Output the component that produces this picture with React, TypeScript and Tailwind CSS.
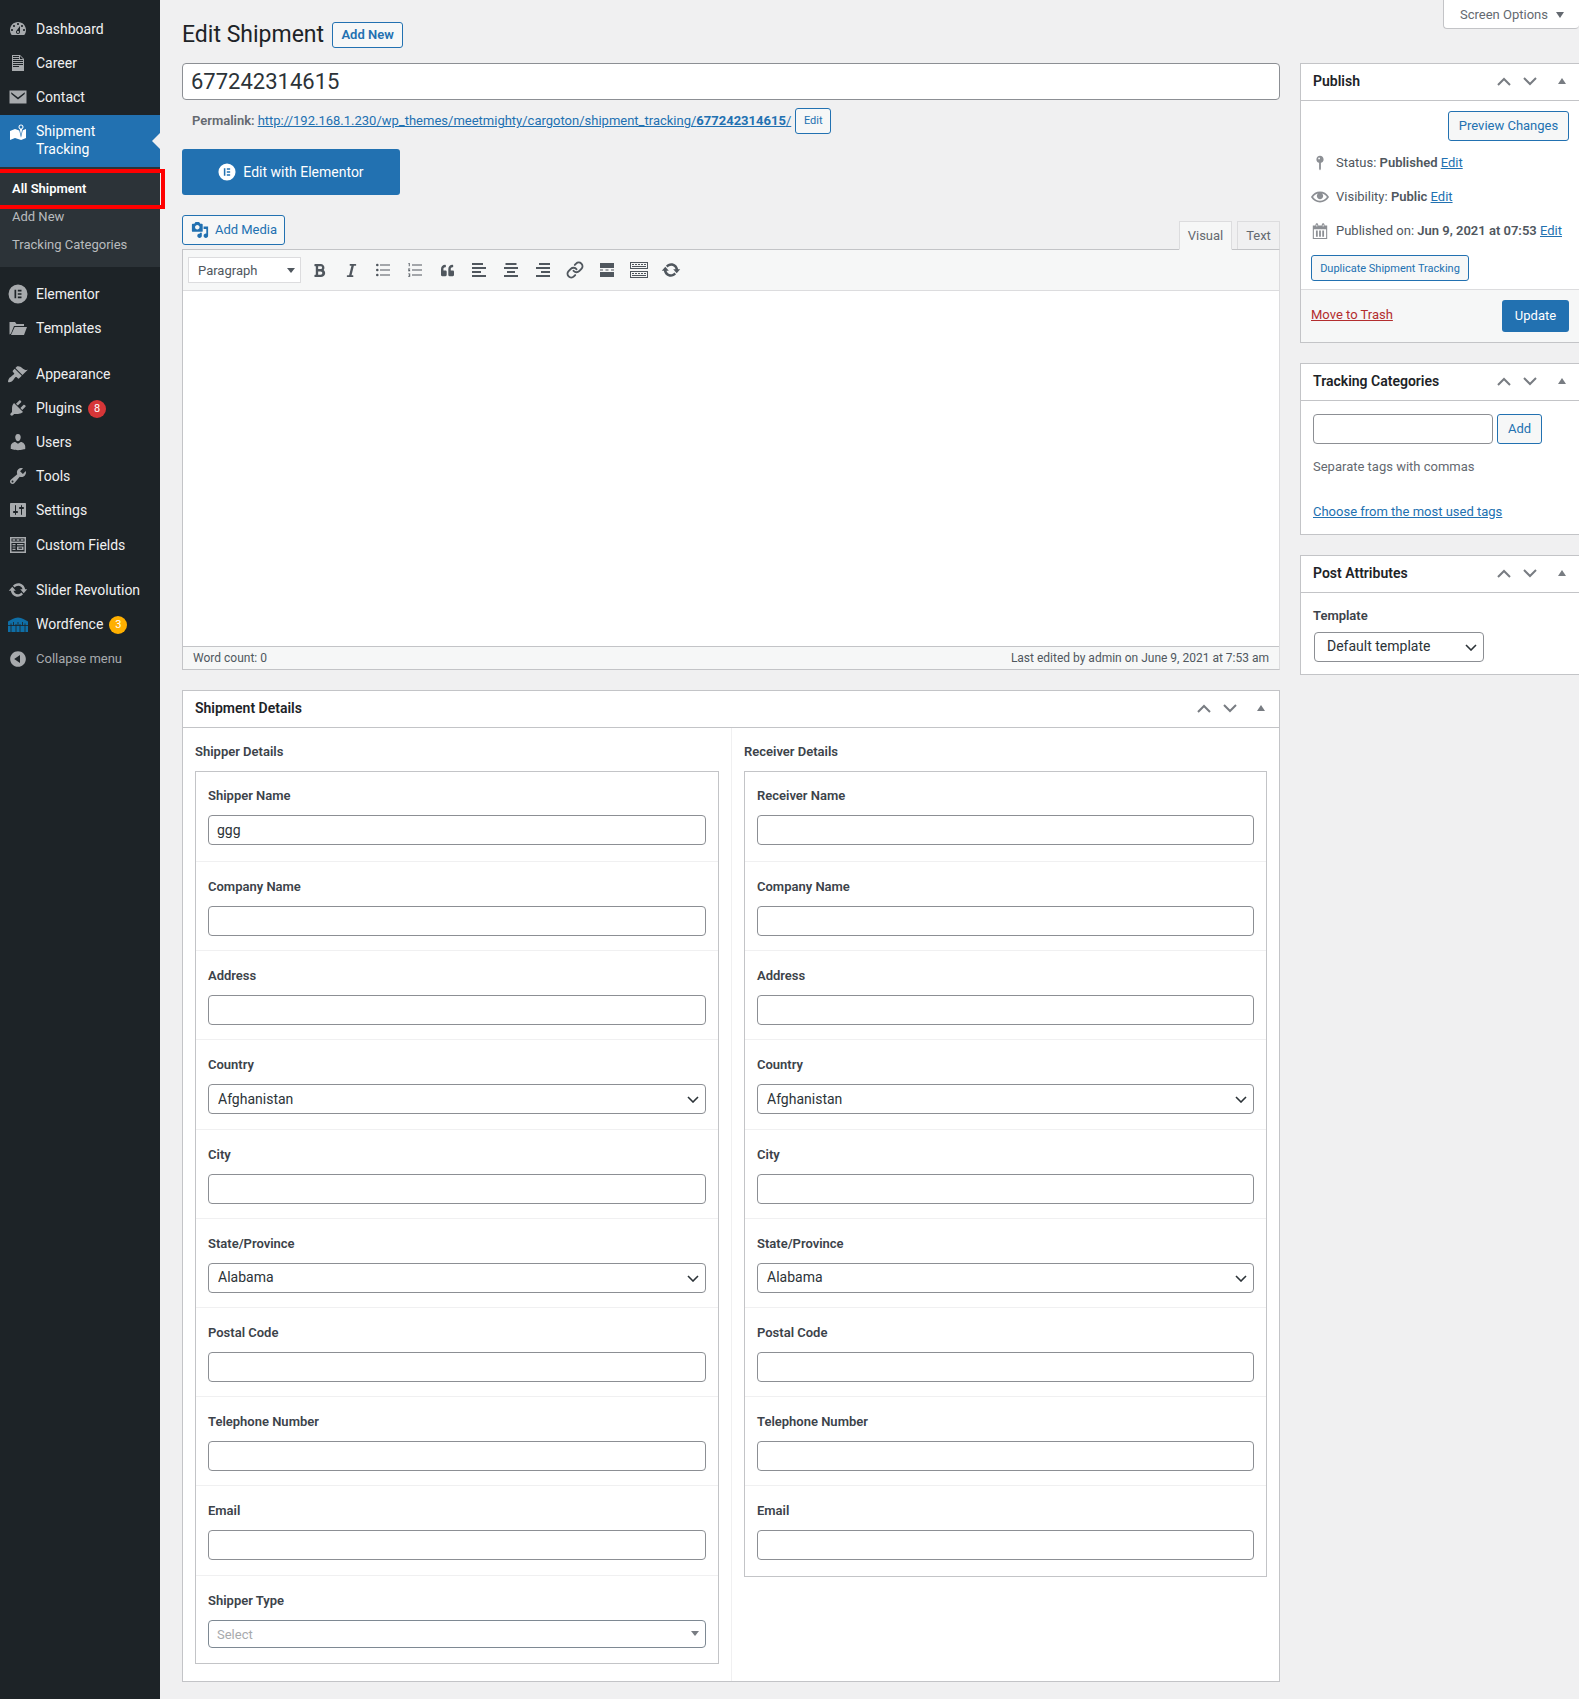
import React from "react";
import { FaBold, FaItalic, FaQuoteLeft } from "react-icons/fa";
import { Link } from "lucide-react";

const P: Record<string, string> = {
  dashboard: "M3.76 16h12.48c1.1-1.37 1.76-3.11 1.76-5 0-4.42-3.58-8-8-8s-8 3.58-8 8c0 1.89.66 3.63 1.76 5zM10 4c.55 0 1 .45 1 1s-.45 1-1 1-1-.45-1-1 .45-1 1-1zM6 6c.55 0 1 .45 1 1s-.45 1-1 1-1-.45-1-1 .45-1 1-1zm8 0c.55 0 1 .45 1 1s-.45 1-1 1-1-.45-1-1 .45-1 1-1zm-5.37 5.55L12 7v6c0 1.1-.9 2-2 2s-2-.9-2-2c0-.57.24-1.08.63-1.45zM4 10c.55 0 1 .45 1 1s-.45 1-1 1-1-.45-1-1 .45-1 1-1zm12 0c.55 0 1 .45 1 1s-.45 1-1 1-1-.45-1-1 .45-1 1-1zm-5 3c0-.55-.45-1-1-1s-1 .45-1 1 .45 1 1 1 1-.45 1-1z",
  page: "M12 2l4 4v12H4V2h8zM5 3v1h6V3H5zm7 3h3l-3-3v3zM5 5v1h6V5H5zm10 3V7H5v1h10zm0 2V9H5v1h10zm0 2v-1H5v1h10zm-4 2v-1H5v1h6z",
  email: "M1.5 3.5h17v13h-17zM3.2 5.2L10 10.6l6.8-5.4-.1 1.7L10 12.4 3.3 6.9z",
  location: "M13 13.14l1.17-5.94c.79-.43 1.33-1.25 1.33-2.2 0-1.38-1.12-2.5-2.5-2.5S10.5 3.62 10.5 5c0 .95.54 1.77 1.33 2.2zm0-9.64c.83 0 1.5.67 1.5 1.5s-.67 1.5-1.5 1.5-1.5-.67-1.5-1.5.67-1.5 1.5-1.5zm1.72 4.8L18 6.97v9L13.12 18 7 15.97l-5 2v-9l5-2 4.27 1.41 1.73 7.3z",
  elementor: "M10 .5a9.5 9.5 0 1 0 0 19 9.5 9.5 0 0 0 0-19zM6.5 5.8h1.7v8.4H6.5zM9.8 5.8h3.7v1.7H9.8zM9.8 9.15h3.7v1.7H9.8zM9.8 12.5h3.7v1.7H9.8z",
  folder: "M1.5 16.5V4h5.5l1.5 2H16v2H6L3 15.5zM6.7 9H19l-3 8H3z",
  brush: "M14.48 11.06L7.41 3.99l1.5-1.5c.5-.56 2.3-.47 3.51.32 1.21.8 1.43 1.28 2.91 2.1 1.18.64 2.45 1.26 4.45.85zm-.71.71L6.7 4.7 4.93 6.47c-.39.39-.39 1.02 0 1.41l1.06 1.06c.39.39.39 1.03 0 1.42-.6.6-1.43 1.11-2.21 1.69-.35.26-.7.53-1.01.84C1.43 13.23 0 15.6 0 18c2 .5 3.5-.1 4.8-1.5.31-.31.58-.66.84-1.01.58-.78 1.09-1.61 1.69-2.21.39-.39 1.03-.39 1.42 0l1.06 1.06c.39.39 1.02.39 1.41 0z",
  plugin: "M13.11 4.36L9.87 7.6 8 5.73l3.24-3.24c.35-.34 1.05-.2 1.56.32.52.51.66 1.21.31 1.55zm-8 1.77l.91-1.12 9.01 9.01-1.19.84c-.71.71-2.63 1.16-3.82 1.16H6.14L4.9 17.26c-.59.59-1.54.59-2.12 0-.59-.58-.59-1.53 0-2.12l1.24-1.24v-3.88c0-1.13.4-3.19 1.09-3.89zm7.26 3.97l3.24-3.24c.34-.35 1.04-.21 1.55.31.52.51.66 1.21.31 1.55l-3.24 3.25z",
  users: "M10 9.25c-2.27 0-2.73-3.44-2.73-3.44C7 4.02 7.82 2 9.97 2c2.16 0 2.98 2.02 2.71 3.81 0 0-.41 3.44-2.68 3.44zm0 2.57L12.72 10c2.39 0 4.52 2.33 4.52 4.53v2.49s-3.65 1.13-7.24 1.13c-3.65 0-7.24-1.13-7.24-1.13v-2.49c0-2.25 1.94-4.48 4.47-4.48z",
  tools: "M16.68 9.77c-1.34 1.34-3.3 1.67-4.95.99l-5.41 6.52c-.99.99-2.59.99-3.58 0s-.99-2.59 0-3.57l6.52-5.42c-.68-1.65-.35-3.61.99-4.95 1.28-1.28 3.12-1.62 4.72-1.06l-2.89 2.89 2.82 2.82 2.86-2.87c.53 1.58.18 3.39-1.08 4.65zM3.81 16.21c.4.39 1.04.39 1.43 0 .4-.4.4-1.04 0-1.43-.39-.4-1.03-.4-1.43 0-.39.39-.39 1.03 0 1.43z",
  settings: "M18 16V4c0-.55-.45-1-1-1H3c-.55 0-1 .45-1 1v12c0 .55.45 1 1 1h14c.55 0 1-.45 1-1zM8 11h1c.55 0 1 .45 1 1s-.45 1-1 1H8v1.5c0 .28-.22.5-.5.5s-.5-.22-.5-.5V13H6c-.55 0-1-.45-1-1s.45-1 1-1h1V5.5c0-.28.22-.5.5-.5s.5.22.5.5V11zm5-2h-1c-.55 0-1-.45-1-1s.45-1 1-1h1V5.5c0-.28.22-.5.5-.5s.5.22.5.5V7h1c.55 0 1 .45 1 1s-.45 1-1 1h-1v5.5c0 .28-.22.5-.5.5s-.5-.22-.5-.5V9z",
  fields: "M2 2h16v16H2zM3.5 3.5v3h13v-3zM4.5 4.3h2.8v1.4H4.5zM8.6 4.3h2.8v1.4H8.6zM12.7 4.3h2.8v1.4h-2.8zM3.5 8v8.5h13V8zM4.5 9h3v1.2h-3zM9 9h6.5v1.2H9zM4.5 11.4h3v1.2h-3zM9 11.4h6.5v3.6H9zM10.5 12.6h3.5v1.2h-3.5zM4.5 13.8h3V15h-3z",
  update: "M10.2 3.28c3.53 0 6.43 2.61 6.92 6h2.08l-3.5 4-3.5-4h2.32c-.45-1.97-2.21-3.45-4.32-3.45-1.45 0-2.73.71-3.54 1.78L4.95 5.66C6.23 4.2 8.11 3.28 10.2 3.28zm-.4 13.44c-3.52 0-6.43-2.61-6.92-6H.8l3.5-4c1.17 1.33 2.33 2.67 3.5 4H5.48c.45 1.97 2.21 3.45 4.32 3.45 1.45 0 2.73-.71 3.54-1.78l1.71 1.95c-1.28 1.46-3.15 2.38-5.25 2.38z",
  collapse: "M10 2.16c4.33 0 7.84 3.51 7.84 7.84s-3.51 7.84-7.84 7.84S2.16 14.33 2.16 10 5.71 2.16 10 2.16zm2 11.72V6.12L6.18 9.97z",
  pin: "M14 6c0 1.86-1.28 3.41-3 3.86V16c0 1-1 2-1 2s-1-1-1-2V9.86c-1.72-.45-3-2-3-3.86 0-2.21 1.79-4 4-4s4 1.79 4 4zM8 5c0 .55.45 1 1 1s1-.45 1-1-.45-1-1-1-1 .45-1 1z",
  eye: "M19.7 9.4C17.7 6 14 3.9 10 3.9S2.3 6 .3 9.4L0 10l.3.6c2 3.4 5.7 5.5 9.7 5.5s7.7-2.1 9.7-5.5l.3-.6-.3-.6zM10 14.1c-3.1 0-6-1.6-7.7-4.1C3.6 8 5.7 6.6 8 6.1c-.9.6-1.5 1.7-1.5 2.9 0 1.9 1.6 3.5 3.5 3.5s3.5-1.6 3.5-3.5c0-1.2-.6-2.3-1.5-2.9 2.3.5 4.4 1.9 5.7 3.9-1.7 2.5-4.6 4.1-7.7 4.1z",
  calendar: "M15 4h3v15H2V4h3V3c0-.41.15-.76.44-1.06.29-.29.65-.44 1.06-.44s.77.15 1.06.44c.29.3.44.65.44 1.06v1h4V3c0-.41.15-.76.44-1.06.29-.29.65-.44 1.06-.44s.77.15 1.06.44c.29.3.44.65.44 1.06v1zM6 5h1V3H6zm7 0h1V3h-1zM3.2 17.8h13.6V8H3.2zM5.5 9.5h2v7h-2zM9 9.5h2v7H9zM12.5 9.5h2v7h-2z",
  media: "M13 11V4c0-.55-.45-1-1-1h-1.67L9 1H5L3.67 3H2c-.55 0-1 .45-1 1v7c0 .55.45 1 1 1h10c.55 0 1-.45 1-1zM7 4.5c1.38 0 2.5 1.12 2.5 2.5S8.38 9.5 7 9.5 4.5 8.38 4.5 7 5.62 4.5 7 4.5zM14 6h5v10.5c0 1.38-1.12 2.5-2.5 2.5S14 17.88 14 16.5s1.12-2.5 2.5-2.5c.17 0 .34.02.5.05V9h-3V6zm-4 8.05V13h2v3.5c0 1.38-1.12 2.5-2.5 2.5S7 17.88 7 16.5 8.12 14 9.5 14c.17 0 .34.02.5.05z",
};

function Dash({ name, className }: { name: string; className: string }) {
  return (
    <svg viewBox="0 0 20 20" className={className} fill="currentColor">
      <path fillRule="evenodd" d={P[name]} />
    </svg>
  );
}

function Wordfence() {
  return (
    <svg viewBox="0 0 20 15" className="w-[20px] h-[15px]">
      <path d="M0 4.5C3 3 6 .5 10 .5s7 2.5 10 4V15H0z" fill="#0f6ea6" />
      <g stroke="#1d2327" strokeWidth="0.8">
        <path d="M0 8.5h20M3 6.5V15M5.5 5v3.5M8 7v8M10 5v3.5M12 7v8M14.5 5v3.5M17 6.5V15" />
      </g>
    </svg>
  );
}

type Item = { icon: string; label: string; badge?: { n: string; c: string } };

function MenuItem({ icon, label, badge }: Item) {
  return (
    <div className="flex items-center h-[34px] text-[14px] leading-[18px] text-[#f0f0f1]">
      <div className="w-[36px] flex justify-center text-[#a7aaad]">
        {icon === "wordfence" ? <Wordfence /> : <Dash name={icon} className="w-[20px] h-[20px]" />}
      </div>
      <span>{label}</span>
      {badge && (
        <span className={`ml-[6px] w-[18px] h-[18px] translate-y-[1px] rounded-full text-white text-[11px] flex items-center justify-center ${badge.c}`}>
          {badge.n}
        </span>
      )}
    </div>
  );
}

function Sidebar() {
  return (
    <aside className="w-[160px] shrink-0 bg-[#1d2327] relative">
      <div className="pt-[12px]">
        <MenuItem icon="dashboard" label="Dashboard" />
        <MenuItem icon="page" label="Career" />
        <MenuItem icon="email" label="Contact" />
        <div className="mt-[1px] bg-[#2271b1] h-[52px] flex items-start relative text-white text-[14px] leading-[18px]">
          <div className="w-[36px] flex justify-center pt-[7px] text-white">
            <Dash name="location" className="w-[20px] h-[20px]" />
          </div>
          <span className="pt-[7px]">
            Shipment
            <br />
            Tracking
          </span>
          <span className="absolute right-0 top-[18px] border-y-[8px] border-y-transparent border-r-[8px] border-r-[#f0f0f1]" />
        </div>
        <div className="bg-[#2c3338] h-[100px] pt-[8px] text-[13px] leading-[28px] text-[#b8bbbe] pl-[12px]">
          <div className="h-[28px] font-semibold text-white">All Shipment</div>
          <div className="h-[28px]">Add New</div>
          <div className="h-[28px]">Tracking Categories</div>
        </div>
        <div className="mt-[10px]">
          <MenuItem icon="elementor" label="Elementor" />
          <MenuItem icon="folder" label="Templates" />
        </div>
        <div className="mt-[12px]">
          <MenuItem icon="brush" label="Appearance" />
          <MenuItem icon="plugin" label="Plugins" badge={{ n: "8", c: "bg-[#d63638]" }} />
          <MenuItem icon="users" label="Users" />
          <MenuItem icon="tools" label="Tools" />
          <MenuItem icon="settings" label="Settings" />
          <div className="mt-[1px]">
            <MenuItem icon="fields" label="Custom Fields" />
          </div>
        </div>
        <div className="mt-[11px]">
          <MenuItem icon="update" label="Slider Revolution" />
          <MenuItem icon="wordfence" label="Wordfence" badge={{ n: "3", c: "bg-[#ffb000]" }} />
          <div className="mt-[1px] flex items-center h-[34px] text-[13px] text-[#a7aaad]">
            <div className="w-[36px] flex justify-center">
              <Dash name="collapse" className="w-[20px] h-[20px]" />
            </div>
            <span>Collapse menu</span>
          </div>
        </div>
      </div>
      <div className="absolute left-[-4px] top-[169px] w-[169px] h-[40px] border-[4px] border-[#ff0000]" />
    </aside>
  );
}

function Handles({ gap }: { gap: string }) {
  return (
    <div className="flex items-center text-[#787c82]">
      <svg viewBox="0 0 14 9" className="w-[14px] h-[9px]" fill="none" stroke="currentColor" strokeWidth="2">
        <path d="M1 8l6-6 6 6" />
      </svg>
      <svg viewBox="0 0 14 9" className="w-[14px] h-[9px] ml-[12px]" fill="none" stroke="currentColor" strokeWidth="2">
        <path d="M1 1l6 6 6-6" />
      </svg>
      <svg viewBox="0 0 8 6" className={`w-[8px] h-[6px] ${gap}`} fill="currentColor">
        <path d="M4 0l4 6H0z" />
      </svg>
    </div>
  );
}

function PanelHeader({ title, className, gap }: { title: string; className: string; gap: string }) {
  return (
    <div className={`flex items-center justify-between border-b border-[#c3c4c7] pb-[2px] ${className}`}>
      <span className="text-[14px] font-semibold text-[#1d2327]">{title}</span>
      <Handles gap={gap} />
    </div>
  );
}

const inputCls = "block w-full border border-[#8c8f94] rounded-[4px] bg-white";

function Chevron() {
  return (
    <svg viewBox="0 0 12 7" className="w-[12px] h-[7px] absolute right-[7px] top-[12px] pointer-events-none" fill="none" stroke="#2c3338" strokeWidth="1.6">
      <path d="M1 1l5 5 5-5" />
    </svg>
  );
}

function Field({ label, value, select, first }: { label: string; value?: string; select?: boolean; first?: boolean }) {
  return (
    <div className={`${first ? "h-[90px] pt-[14px]" : "h-[89.2px] pt-[15px]"} px-[12px] border-b border-[#f0f0f1] last:border-b-0`}>
      <div className="text-[13px] leading-[20px] font-semibold text-[#3c434a] mb-[9px]">{label}</div>
      {select ? (
        <div className="relative">
          <select className={`${inputCls} h-[30px] pl-[9px] text-[14px] text-[#2c3338] appearance-none`} defaultValue={value}>
            <option>{value}</option>
          </select>
          <Chevron />
        </div>
      ) : (
        <input readOnly value={value || ""} className={`${inputCls} h-[30px] px-[8px] text-[14px] text-[#2c3338]`} />
      )}
    </div>
  );
}

function Column({ type, title, wrap }: { type: "Shipper" | "Receiver"; title: string; wrap: string }) {
  return (
    <div className={wrap}>
      <div className="h-[43px] pt-[14px] text-[13px] leading-[20px] font-semibold text-[#3c434a]">{title}</div>
      <div className="border border-[#c3c4c7]">
        <Field first label={`${type} Name`} value={type === "Shipper" ? "ggg" : ""} />
        <Field label="Company Name" />
        <Field label="Address" />
        <Field label="Country" value="Afghanistan" select />
        <Field label="City" />
        <Field label="State/Province" value="Alabama" select />
        <Field label="Postal Code" />
        <Field label="Telephone Number" />
        <Field label="Email" />
        {type === "Shipper" && (
          <div className="h-[88px] pt-[15px] px-[12px] border-t border-[#f0f0f1] mt-[-1px]">
            <div className="text-[13px] leading-[20px] font-semibold text-[#3c434a] mb-[9px]">Shipper Type</div>
            <div className="flex items-center justify-between h-[28px] border border-[#7e8993] rounded-[4px] pl-[8px] pr-[6px] text-[13px] text-[#a7aaad]">
              <span className="pt-[2px]">Select</span>
              <span className="border-x-[4px] border-x-transparent border-t-[5px] border-t-[#787c82]" />
            </div>
          </div>
        )}
      </div>
    </div>
  );
}

function Toolbar() {
  const Btn = ({ children }: { children: React.ReactNode }) => (
    <div className="w-[32px] h-[26px] flex items-center justify-center text-[#50575e]">{children}</div>
  );
  const Lines = ({ kind }: { kind: "l" | "c" | "r" }) => (
    <svg viewBox="0 0 14 14" className="w-[14px] h-[14px]" fill="#50575e">
      {kind === "l" && <path d="M0 0h11v2H0zM0 4h14v2H0zM0 8h9v2H0zM0 12h14v2H0z" />}
      {kind === "c" && <path d="M1.5 0h11v2h-11zM0 4h14v2H0zM3 8h8v2H3zM0 12h14v2H0z" />}
      {kind === "r" && <path d="M3 0h11v2H3zM0 4h14v2H0zM5 8h9v2H5zM0 12h14v2H0z" />}
    </svg>
  );
  return (
    <div className="h-[41px] bg-[#f6f7f7] border-b border-[#dcdcde] flex items-center pl-[5px]">
      <div className="w-[113px] h-[26px] bg-white border border-[#dcdcde] flex items-center justify-between pl-[9px] pr-[5px] text-[13px] text-[#50575e] mr-[2px]">
        <span className="pt-[2px]">Paragraph</span>
        <span className="border-x-[4px] border-x-transparent border-t-[5px] border-t-[#50575e]" />
      </div>
      <Btn><FaBold className="w-[13px] h-[15px]" /></Btn>
      <Btn><FaItalic className="w-[13px] h-[15px]" /></Btn>
      <Btn>
        <svg viewBox="0 0 14 14" className="w-[14px] h-[14px]" fill="#50575e">
          <circle cx="1.3" cy="2" r="1.3" /><circle cx="1.3" cy="7" r="1.3" /><circle cx="1.3" cy="12" r="1.3" />
          <path d="M4 1.4h10v1.2H4zM4 6.4h10v1.2H4zM4 11.4h10v1.2H4z" />
        </svg>
      </Btn>
      <Btn>
        <svg viewBox="0 0 14 14" className="w-[14px] h-[14px]" fill="#50575e">
          <path d="M0.5 0h1.2v3.2H0.8V1H.5zM0.2 5.4h2v.9H1.1l1.1 1.2v.7H.1v-.9H1.1L.1 6.2zM.2 10.6h2v3.2h-2v-.8h1.1v-.4H.6v-.7h.7V11.3H.2z" />
          <path d="M4 1.4h10v1.2H4zM4 6.4h10v1.2H4zM4 11.4h10v1.2H4z" />
        </svg>
      </Btn>
      <Btn><FaQuoteLeft className="w-[15px] h-[13px]" /></Btn>
      <Btn><Lines kind="l" /></Btn>
      <Btn><Lines kind="c" /></Btn>
      <Btn><Lines kind="r" /></Btn>
      <Btn><Link className="w-[18px] h-[18px]" strokeWidth={2.6} /></Btn>
      <Btn>
        <svg viewBox="0 0 14 14" className="w-[14px] h-[14px]" fill="#50575e">
          <path d="M0 0h14v5H0zM0 6.4h3v1.2H0zM5.5 6.4h3v1.2h-3zM11 6.4h3v1.2h-3zM0 9h14v5H0z" />
        </svg>
      </Btn>
      <Btn>
        <svg viewBox="0 0 18 16" className="w-[18px] h-[16px]" fill="#50575e" fillRule="evenodd">
          <path d="M0 0h18v7H0zM1 1v5h16V1zM2 2h2v1H2zM5 2h2v1H5zM8 2h2v1H8zM11 2h2v1h-2zM14 2h2v1h-2zM2 4h14v1H2zM0 9h18v7H0zM1 10v5h16v-5zM2 11h2v1H2zM5 11h2v1H5zM8 11h2v1H8zM11 11h2v1h-2zM14 11h2v1h-2zM2 13h14v1H2z" />
        </svg>
      </Btn>
      <Btn><Dash name="update" className="w-[20px] h-[20px]" /></Btn>
    </div>
  );
}

function LeftColumn() {
  return (
    <div className="w-[1098px] shrink-0">
      <input readOnly value="677242314615" className="block w-full h-[37px] border border-[#8c8f94] rounded-[4px] bg-white px-[8px] text-[22px] text-[#2c3338]" />
      <div className="mt-[8px] h-[26px] flex items-center pl-[10px] text-[13px] text-[#646970]">
        <span className="font-semibold mr-[3px]">Permalink:</span>
        <a className="text-[#2271b1] underline">
          http://192.168.1.230/wp_themes/meetmighty/cargoton/shipment_tracking/<b>677242314615</b>/
        </a>
        <span className="ml-[4px] h-[26px] w-[36px] border border-[#2271b1] rounded-[3px] bg-[#f6f7f7] text-[11px] text-[#2271b1] flex items-center justify-center">Edit</span>
      </div>
      <div className="mt-[15px] w-[218px] h-[46px] bg-[#2271b1] rounded-[3px] flex items-center justify-center text-white text-[14px]">
        <svg viewBox="0 0 20 20" className="w-[18px] h-[18px] mr-[7px]" fill="#fff">
          <path fillRule="evenodd" d={P.elementor} />
        </svg>
        Edit with Elementor
      </div>
      <div className="mt-[20px] h-[34px] flex justify-between items-start">
        <div className="w-[103px] h-[30px] pl-[1px] border border-[#2271b1] rounded-[3px] bg-[#f6f7f7] flex items-center justify-center text-[13px] text-[#2271b1]">
          <Dash name="media" className="w-[18px] h-[18px] mr-[6px]" />
          Add Media
        </div>
        <div className="flex items-end h-[34px] text-[13px] text-[#646970]">
          <div className="w-[53px] h-[29px] bg-[#f6f7f7] border border-[#dcdcde] border-b-[#f6f7f7] flex items-center justify-center relative top-[1px]">Visual</div>
          <div className="w-[43px] ml-[5px] h-[28px] bg-[#f0f0f1] border border-b-0 border-[#dcdcde] flex items-center justify-center">Text</div>
        </div>
      </div>
      <div className="border border-[#c3c4c7] border-r-[#dcdcde] bg-white">
        <Toolbar />
        <div className="h-[355px] bg-white" />
        <div className="h-[23px] bg-[#f6f7f7] border-t border-[#c3c4c7] flex items-center justify-between px-[10px] text-[12px] text-[#50575e]">
          <span>Word count: 0</span>
          <span>Last edited by admin on June 9, 2021 at 7:53 am</span>
        </div>
      </div>
      <div className="mt-[20px] h-[992px] border border-[#c3c4c7] bg-white">
        <PanelHeader title="Shipment Details" className="h-[37px] pl-[12px] pr-[14px]" gap="ml-[20px]" />
        <div className="flex">
          <Column type="Shipper" title="Shipper Details" wrap="w-[549px] pl-[12px] pr-[12px] border-r border-[#f0f0f1] h-[953px]" />
          <Column type="Receiver" title="Receiver Details" wrap="flex-1 pl-[12px] pr-[12px]" />
        </div>
      </div>
    </div>
  );
}

function Panel({ title, children, className }: { title: string; children: React.ReactNode; className?: string }) {
  return (
    <div className={`border border-[#c3c4c7] bg-white ${className || ""}`}>
      <PanelHeader title={title} className="h-[37px] pl-[12px] pr-[14px]" gap="ml-[21px]" />
      {children}
    </div>
  );
}

function StatusRow({ icon, children, iconCls }: { icon: string; children: React.ReactNode; iconCls: string }) {
  return (
    <div className="h-[34px] flex items-center text-[13px] text-[#50575e] pl-[9px]">
      <div className="w-[20px] flex justify-center mr-[6px] text-[#8c8f94]"><Dash name={icon} className={iconCls} /></div>
      <span>{children}</span>
    </div>
  );
}

function RightColumn() {
  const edit = <a className="text-[#2271b1] underline">Edit</a>;
  return (
    <div className="w-[281px] shrink-0">
      <Panel title="Publish" className="h-[280px]">
        <div className="h-[188px] pt-[10px]">
          <div className="flex justify-end pr-[11px]">
            <div className="w-[121px] h-[30px] border border-[#2271b1] rounded-[3px] bg-[#f6f7f7] text-[13px] text-[#2271b1] flex items-center justify-center">Preview Changes</div>
          </div>
          <div className="mt-[5px]">
            <StatusRow icon="pin" iconCls="w-[18px] h-[18px]">Status: <b className="font-semibold">Published</b> {edit}</StatusRow>
            <StatusRow icon="eye" iconCls="w-[18px] h-[18px]">Visibility: <b className="font-semibold">Public</b> {edit}</StatusRow>
            <StatusRow icon="calendar" iconCls="w-[18px] h-[18px]">Published on: <b className="font-semibold">Jun 9, 2021 at 07:53</b> {edit}</StatusRow>
          </div>
          <div className="ml-[10px] mt-[7px] pt-[2px] w-[158px] h-[26px] border border-[#2271b1] rounded-[3px] bg-[#f6f7f7] text-[11px] text-[#2271b1] flex items-center justify-center">Duplicate Shipment Tracking</div>
        </div>
        <div className="h-[53px] pb-[1px] bg-[#f6f7f7] border-t border-[#dcdcde] flex items-center justify-between pl-[10px] pr-[11px]">
          <a className="text-[13px] text-[#b32d2e] underline pb-[2px]">Move to Trash</a>
          <div className="w-[67px] h-[32px] rounded-[3px] bg-[#2271b1] text-white text-[13px] flex items-center justify-center">Update</div>
        </div>
      </Panel>
      <Panel title="Tracking Categories" className="mt-[20px] h-[172px]">
        <div className="pt-[13px] pl-[12px]">
          <div className="flex">
            <input readOnly className="w-[180px] h-[30px] border border-[#8c8f94] rounded-[4px] bg-white" />
            <div className="ml-[4px] w-[45px] h-[30px] border border-[#2271b1] rounded-[3px] bg-[#f6f7f7] text-[13px] text-[#2271b1] flex items-center justify-center">Add</div>
          </div>
          <div className="mt-[13px] text-[13px] leading-[20px] text-[#646970]">Separate tags with commas</div>
          <a className="block mt-[25px] text-[13px] leading-[20px] text-[#2271b1] underline">Choose from the most used tags</a>
        </div>
      </Panel>
      <Panel title="Post Attributes" className="mt-[20px] h-[120px]">
        <div className="pt-[13px] pl-[12px]">
          <div className="text-[13px] leading-[20px] font-semibold text-[#3c434a]">Template</div>
          <div className="relative w-[170px] ml-[1px] mt-[6px]">
            <select className={`${inputCls} h-[30px] pl-[12px] pb-[2px] text-[14px] text-[#2c3338] appearance-none`} defaultValue="Default template">
              <option>Default template</option>
            </select>
            <Chevron />
          </div>
        </div>
      </Panel>
    </div>
  );
}

export default function App() {
  return (
    <div className="flex w-[1579px] h-[1699px] overflow-hidden bg-[#f0f0f1] text-[#3c434a] [font-family:Roboto,'Noto_Sans',sans-serif]">
      <Sidebar />
      <main className="flex-1 min-w-0 pl-[22px]">
        <div className="h-[63px] flex justify-between items-start">
          <div className="flex items-center pt-[22px]">
            <h1 className="text-[23px] leading-[26px] text-[#1d2327]">Edit Shipment</h1>
            <div className="ml-[8px] w-[71px] h-[26px] border border-[#2271b1] rounded-[3px] bg-[#f6f7f7] text-[13px] font-semibold text-[#2271b1] flex items-center justify-center">Add New</div>
          </div>
          <div className="w-[136px] h-[29px] pt-[1px] pl-[1px] bg-white border border-t-0 border-r-0 border-[#c3c4c7] rounded-b-[4px] flex items-center justify-center text-[13px] text-[#646970]">
            Screen Options
            <span className="ml-[8px] border-x-[4px] border-x-transparent border-t-[6px] border-t-[#646970]" />
          </div>
        </div>
        <div className="flex gap-[20px]">
          <LeftColumn />
          <RightColumn />
        </div>
      </main>
    </div>
  );
}
